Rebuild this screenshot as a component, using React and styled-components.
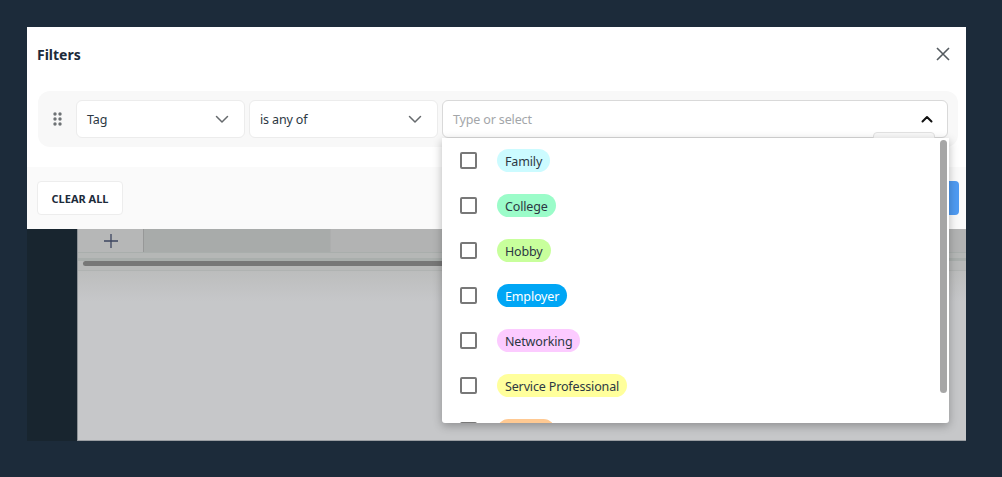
import React from 'react';
import styled, { createGlobalStyle } from 'styled-components';

const Global = createGlobalStyle`
  html, body { margin: 0; padding: 0; height: 100%; background: #1c2b3a; }
  body { font-family: "Noto Sans", "Open Sans", sans-serif; color: #1c2b3a; }
  * { box-sizing: border-box; }
`;

const Page = styled.div`
  width: 1002px;
  height: 477px;
  padding: 27px 36px 36px 27px;
  overflow: hidden;
`;

const Stage = styled.div`
  position: relative;
  width: 939px;
  height: 414px;
  display: flex;
  background: #18252f;
`;

const Sidebar = styled.div`
  width: 50px;
  background: #18252f;
`;

const Main = styled.div`
  flex: 1;
  padding-top: 202px;
  display: flex;
  flex-direction: column;
  background: #c6c7c9;
  border-left: 1px solid #8d9296;
  border-bottom: 1px solid #9a9ea2;
`;

const TabRow = styled.div`
  display: flex;
  height: 24px;
  background: #b2b3b3;
  border-bottom: 1px solid #a9aeac;
`;

const AddTab = styled.div`
  width: 66px;
  display: flex;
  align-items: center;
  justify-content: center;
  color: #3d4560;
  background: #b6b7b7;
  border-right: 1px solid #979898;
`;

const Tab = styled.div`
  width: 187px;
  background: #a8abaa;
  border-right: 1px solid #adaeae;
`;

const ScrollTrack = styled.div`
  height: 18px;
  padding: 8px 0 0 5px;
  background: linear-gradient(#b5b7b6 0 5px, #a9aeac 5px 8px, #b8b9b9 8px);
  border-bottom: 1px solid #b0b3b2;
`;

const ScrollThumb = styled.div`
  width: 400px;
  height: 5px;
  border-radius: 3px;
  background: #777;
`;

const Fade = styled.div`
  height: 30px;
  background: linear-gradient(#bcbdbd, #c6c7c9);
`;

const Modal = styled.div`
  position: absolute;
  top: 0;
  left: 0;
  width: 939px;
  height: 202px;
  background: #fff;
  display: flex;
  flex-direction: column;
`;

const Header = styled.div`
  height: 54px;
  margin-bottom: 10px;
  padding: 0 15px 0 10px;
  display: flex;
  align-items: center;
  justify-content: space-between;
`;

const Title = styled.h2`
  margin: 0;
  font-size: 14px;
  font-weight: 700;
  color: #1c2b3a;
`;

const CloseButton = styled.button`
  border: 0;
  padding: 0;
  background: none;
  display: flex;
  color: #555b60;
`;

const Body = styled.div`
  height: 76px;
  padding: 0 8px 0 11px;
`;

const FilterRow = styled.div`
  height: 56px;
  border-radius: 12px;
  background: #f8f8f8;
  display: flex;
  align-items: center;
  padding: 0 10px 0 14px;
  gap: 4px;
`;

const Grip = styled.div`
  width: 20px;
  display: flex;
  color: #6e7275;
`;

const Select = styled.div`
  position: relative;
  width: ${p => p.$w}px;
  height: 38px;
  flex: ${p => (p.$grow ? 1 : 'none')};
  background: #fff;
  border: 1px solid ${p => (p.$open ? '#d9d9d9' : '#ececec')};
  border-radius: 6px;
  padding: 0 ${p => (p.$open ? 13 : 15)}px 0 10px;
  display: flex;
  align-items: center;
  justify-content: space-between;
  font-size: 12.5px;
  letter-spacing: -0.15px;
  color: #2c3843;
`;

const Placeholder = styled.span`
  padding-top: 1px;
  color: #a3a6a9;
`;

const Chevron = styled.span`
  display: flex;
  color: ${p => (p.$open ? '#111' : '#666a6d')};
`;

const Footer = styled.div`
  flex: 1;
  background: #fafafa;
  padding: 14px 7px 14px 10px;
  display: flex;
  align-items: flex-start;
  justify-content: space-between;
`;

const ClearButton = styled.button`
  width: 86px;
  height: 34px;
  border: 1px solid #ededed;
  border-radius: 4px;
  background: #fff;
  font: 700 11px "Noto Sans", sans-serif;
  color: #1c2b3a;
  padding: 0;
`;

const ApplyButton = styled.button`
  width: 62px;
  height: 34px;
  border: 0;
  border-radius: 4px;
  background: #4f9bf2;
`;

const PeekButton = styled.div`
  position: absolute;
  top: 105px;
  left: 846px;
  width: 62px;
  height: 10px;
  background: #f8f8f8;
  border: 1px solid #e2e2e2;
  border-radius: 4px 4px 0 0;
`;

const Dropdown = styled.div`
  position: absolute;
  top: 111px;
  left: 415px;
  width: 507px;
  height: 285px;
  background: #fff;
  border-radius: 0 0 3px 3px;
  box-shadow: 0 3px 10px rgba(0, 0, 0, 0.28);
  overflow: hidden;
  padding-top: 11px;
`;

const Option = styled.div`
  height: 45px;
  padding-left: 18px;
  display: flex;
  align-items: flex-start;
`;

const Box = styled.span`
  width: 17px;
  height: 17px;
  margin-top: 3px;
  margin-right: 20px;
  border: 2px solid #787878;
  border-radius: 2px;
  background: #fff;
`;

const Chip = styled.span`
  height: 23px;
  padding: 1px 8px 0;
  border-radius: 12px;
  display: flex;
  align-items: center;
  font-size: 12.5px;
  letter-spacing: -0.15px;
  background: ${p => p.$bg};
  color: ${p => p.$fg || '#2c3843'};
`;

const DropScroll = styled.div`
  position: absolute;
  top: 2px;
  right: 2px;
  width: 7px;
  height: 253px;
  border-radius: 4px;
  background: #a6a6a6;
`;

const tags = [
  { name: 'Family', bg: '#ccfbff' },
  { name: 'College', bg: '#9bfcc9' },
  { name: 'Hobby', bg: '#c8ff9c' },
  { name: 'Employer', bg: '#00a6f5', fg: '#fff' },
  { name: 'Networking', bg: '#fccbff' },
  { name: 'Service Professional', bg: '#ffff9c' },
  { name: 'Vendor', bg: '#ffc992' },
];

const ChevronIcon = ({ up }) => (
  <svg width="14" height="14" viewBox="0 0 14 14" fill="none" stroke="currentColor" strokeWidth={up ? 2 : 1.5} strokeLinecap="round" strokeLinejoin="round">
    <path d={up ? 'M2.5 9.5 7 5l4.5 4.5' : 'M1.5 4.5 7 10l5.5-5.5'} />
  </svg>
);

const GripIcon = () => (
  <svg width="12" height="14" viewBox="0 0 12 14" fill="currentColor">
    {[2, 7, 12].map(y => [3, 8].map(x => <circle key={`${x}-${y}`} cx={x} cy={y} r="1.7" />))}
  </svg>
);

const CloseIcon = () => (
  <svg width="16" height="16" viewBox="0 0 16 16" fill="none" stroke="currentColor" strokeWidth="1.6">
    <path d="M2 2l12 12M14 2 2 14" />
  </svg>
);

const PlusIcon = () => (
  <svg width="16" height="16" viewBox="0 0 16 16" fill="none" stroke="currentColor" strokeWidth="1.3">
    <path d="M1 8h14M8 1v14" />
  </svg>
);

export default function App() {
  return (
    <>
      <Global />
      <Page>
        <Stage>
          <Sidebar />
          <Main>
            <TabRow>
              <AddTab><PlusIcon /></AddTab>
              <Tab />
            </TabRow>
            <ScrollTrack><ScrollThumb /></ScrollTrack>
            <Fade />
          </Main>
          <Modal>
            <Header>
              <Title>Filters</Title>
              <CloseButton aria-label="Close"><CloseIcon /></CloseButton>
            </Header>
            <Body>
              <FilterRow>
                <Grip><GripIcon /></Grip>
                <Select $w={169}>Tag<Chevron><ChevronIcon /></Chevron></Select>
                <Select $w={189}>is any of<Chevron><ChevronIcon /></Chevron></Select>
                <Select $grow $open>
                  <Placeholder>Type or select</Placeholder>
                  <Chevron $open><ChevronIcon up /></Chevron>
                </Select>
              </FilterRow>
            </Body>
            <Footer>
              <ClearButton>CLEAR ALL</ClearButton>
              <ApplyButton />
            </Footer>
          </Modal>
          <PeekButton />
          <Dropdown>
            {tags.map(t => (
              <Option key={t.name}>
                <Box />
                <Chip $bg={t.bg} $fg={t.fg}>{t.name}</Chip>
              </Option>
            ))}
            <DropScroll />
          </Dropdown>
        </Stage>
      </Page>
    </>
  );
}
